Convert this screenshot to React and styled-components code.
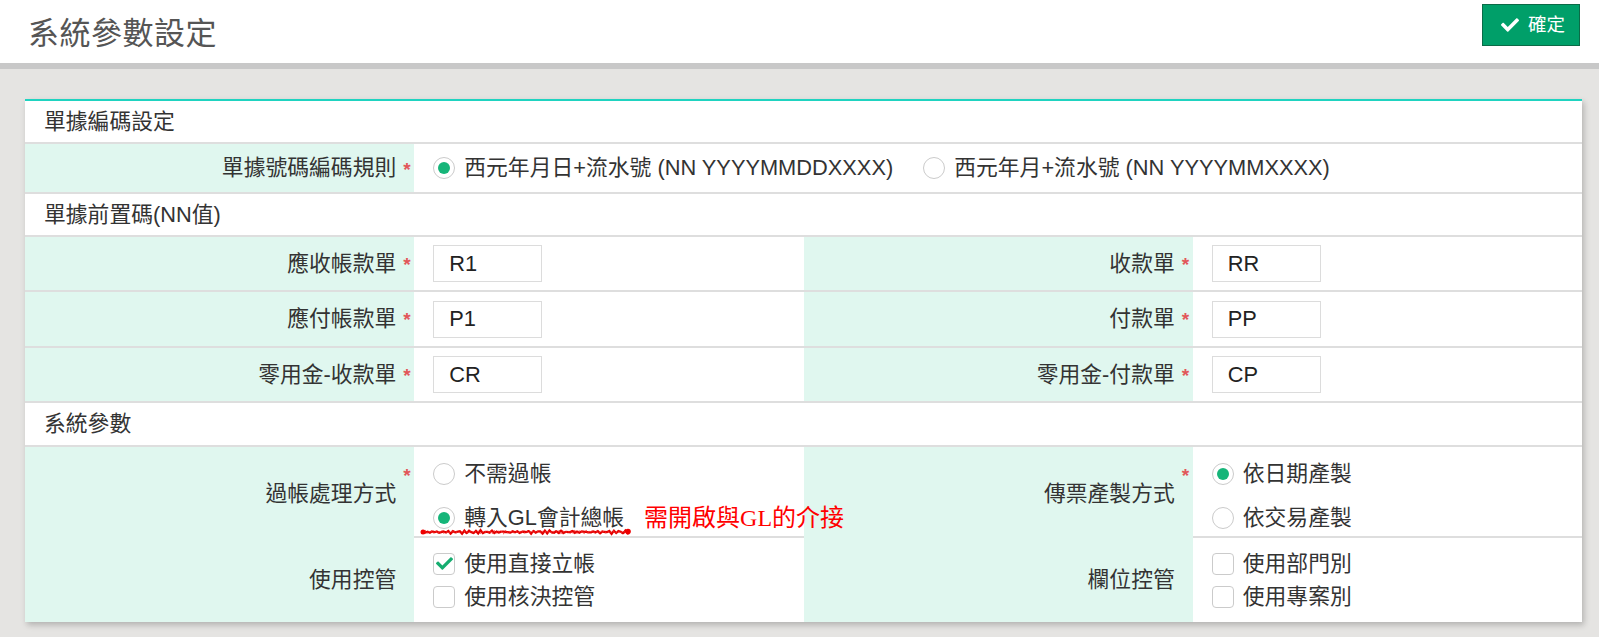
import React from "react";
import styled, { createGlobalStyle } from "styled-components";
import { FaCheck } from "react-icons/fa";

const GlobalStyle = createGlobalStyle`
  html, body {
    margin: 0;
    padding: 0;
    background: #e5e4e2;
    font-family: "Liberation Sans", "Noto Sans CJK TC", sans-serif;
    color: #333;
  }
  * { box-sizing: border-box; }
`;

const FONT = 21.8;

const Page = styled.div`
  min-height: 637px;
  background: #e5e4e2;
`;

const Header = styled.header`
  height: 69px;
  background: #fff;
  border-bottom: 6px solid #c8c8c8;
  display: flex;
  align-items: flex-start;
  justify-content: space-between;
  padding: 0 19px 0 28px;
`;

const Title = styled.h1`
  margin: 0;
  height: 63px;
  display: flex;
  align-items: center;
  padding-top: 3px;
  font-size: 31px;
  font-weight: normal;
  color: #555;
  line-height: 1;
  letter-spacing: 0.5px;
`;

const ConfirmButton = styled.button`
  margin-top: 4px;
  width: 98px;
  height: 42px;
  display: flex;
  align-items: center;
  gap: 9px;
  padding: 0 0 0 18px;
  background: #009f69;
  border: 1px solid #0b6b47;
  color: #fff;
  font-family: inherit;
  font-size: 18.5px;
  line-height: 1;
  cursor: pointer;
  svg { width: 18px; height: 18px; }
`;

const Content = styled.main`
  padding: 30px 17px 0 25px;
`;

const Panel = styled.section`
  background: #fff;
  border-top: 2px solid #1fd3c0;
  box-shadow: 2px 3px 6px rgba(0, 0, 0, 0.22);
`;

const SectionRow = styled.div`
  height: ${(p) => p.$h || 43}px;
  display: flex;
  align-items: center;
  padding-left: 19px;
  font-size: ${FONT}px;
  line-height: 1;
  border-bottom: 2px solid #dedede;
  color: #333;
`;

const FormRow = styled.div`
  display: grid;
  grid-template-columns: repeat(4, minmax(0, 1fr));
  height: ${(p) => p.$h}px;
  border-bottom: ${(p) => (p.$last ? "none" : "2px solid #dedede")};
`;

const LabelCell = styled.div`
  background: #e0f7ef;
  display: flex;
  justify-content: flex-end;
  align-items: center;
  padding-right: 2px;
  font-size: ${FONT}px;
  line-height: 1;
  color: #333;
`;

const Req = styled.span`
  align-self: flex-start;
  margin-top: ${(p) => p.$top || 17}px;
  margin-left: 7px;
  width: 9px;
  font-size: 19px;
  font-weight: bold;
  line-height: 1;
  color: #e2575a;
  visibility: ${(p) => (p.$show ? "visible" : "hidden")};
`;

const ValueCell = styled.div`
  grid-column: span ${(p) => p.$span || 1};
  display: flex;
  flex-direction: ${(p) => (p.$stack ? "column" : "row")};
  justify-content: ${(p) => (p.$stack ? "center" : "flex-start")};
  align-items: ${(p) => (p.$stack ? "flex-start" : "center")};
  gap: ${(p) => p.$gap || 0}px;
  padding-left: 19px;
  padding-top: ${(p) => p.$pt || 0}px;
  font-size: ${FONT}px;
  line-height: 1;
  color: #333;
`;

const Option = styled.label`
  position: relative;
  display: flex;
  align-items: center;
  gap: 9px;
  height: ${(p) => p.$h || 44}px;
  white-space: nowrap;
`;

const RadioCircle = styled.span`
  width: 22px;
  height: 22px;
  flex: none;
  border: 1px solid #cbcbcb;
  border-radius: 50%;
  background: #fff;
  display: flex;
  align-items: center;
  justify-content: center;
  &::after {
    content: "";
    width: 12px;
    height: 12px;
    border-radius: 50%;
    background: ${(p) => (p.$checked ? "#16b579" : "transparent")};
  }
`;

const CheckBox = styled.span`
  width: 22px;
  height: 22px;
  flex: none;
  border: 1px solid #cbcbcb;
  border-radius: 4px;
  background: #fff;
  display: flex;
  align-items: center;
  justify-content: center;
  color: #16ad70;
  svg { width: 17px; height: 17px; }
`;

const TextInput = styled.input`
  width: 109px;
  height: 37px;
  border: 1px solid #dcdcdc;
  padding: 0 15px;
  font-family: "Liberation Sans", "Noto Sans CJK TC", sans-serif;
  font-size: ${FONT}px;
  color: #222;
  background: #fff;
  outline: none;
`;

const Note = styled.span`
  margin-left: 11px;
  font-family: "Liberation Serif", "Noto Sans CJK TC", serif;
  font-size: 24px;
  color: #f00;
`;

const Scribble = styled.svg`
  position: absolute;
  left: -13px;
  top: 32px;
  width: 214px;
  height: 8px;
  overflow: visible;
  pointer-events: none;
`;

const makePoints = (seed, amp) =>
  Array.from({ length: 90 }, (_, i) => {
    const x = 3 + i * 2.3;
    const y =
      4 +
      Math.sin(i * 2.7 + seed) * amp +
      ((((i + seed) * 7) % 5) - 2) * 0.35;
    return `${x.toFixed(1)},${y.toFixed(1)}`;
  }).join(" ");

const scribbleA = makePoints(0, 1.1);
const scribbleB = makePoints(2, 0.9);

function RedScribble() {
  return (
    <Scribble viewBox="0 0 214 8">
      <polyline
        points={scribbleA}
        fill="none"
        stroke="#e10000"
        strokeWidth="2.3"
        strokeDasharray="3 1.2 1.5 1"
        strokeLinecap="round"
      />
      <polyline
        points={scribbleB}
        fill="none"
        stroke="#ff2b2b"
        strokeWidth="1.5"
        strokeDasharray="1.2 1.6"
        opacity="0.8"
      />
      <circle cx="3" cy="4" r="2.5" fill="#e00" />
      <circle cx="208" cy="3.6" r="2.8" fill="#e00" />
    </Scribble>
  );
}

function Label({ children, required, top }) {
  return (
    <LabelCell>
      {children}
      <Req $show={required} $top={top}>*</Req>
    </LabelCell>
  );
}

function Radio({ checked, children, h }) {
  return (
    <Option $h={h}>
      <RadioCircle $checked={checked} />
      {children}
    </Option>
  );
}

function Check({ checked, children, h }) {
  return (
    <Option $h={h}>
      <CheckBox>{checked && <FaCheck />}</CheckBox>
      {children}
    </Option>
  );
}

const prefixRows = [
  ["應收帳款單", "R1", "收款單", "RR"],
  ["應付帳款單", "P1", "付款單", "PP"],
  ["零用金-收款單", "CR", "零用金-付款單", "CP"],
];

export default function App() {
  return (
    <Page>
      <GlobalStyle />
      <Header>
        <Title>系統參數設定</Title>
        <ConfirmButton>
          <FaCheck />
          確定
        </ConfirmButton>
      </Header>
      <Content>
        <Panel>
          <SectionRow $h={43}>單據編碼設定</SectionRow>
          <FormRow $h={50}>
            <Label required top={16}>單據號碼編碼規則</Label>
            <ValueCell $span={3} $gap={30}>
              <Radio checked>西元年月日+流水號 (NN YYYYMMDDXXXX)</Radio>
              <Radio>西元年月+流水號 (NN YYYYMMXXXX)</Radio>
            </ValueCell>
          </FormRow>
          <SectionRow $h={43}>單據前置碼(NN值)</SectionRow>
          {prefixRows.map(([l1, v1, l2, v2], i) => (
            <FormRow key={l1} $h={i === 1 ? 56 : 55}>
              <Label required top={18}>{l1}</Label>
              <ValueCell>
                <TextInput defaultValue={v1} readOnly />
              </ValueCell>
              <Label required top={18}>{l2}</Label>
              <ValueCell>
                <TextInput defaultValue={v2} readOnly />
              </ValueCell>
            </FormRow>
          ))}
          <SectionRow $h={44}>系統參數</SectionRow>
          <FormRow $h={91}>
            <Label required top={19}>過帳處理方式</Label>
            <ValueCell $stack $pt={5}>
              <Radio>不需過帳</Radio>
              <Radio checked>
                轉入GL會計總帳
                <Note>需開啟與GL的介接</Note>
                <RedScribble />
              </Radio>
            </ValueCell>
            <Label required top={19}>傳票產製方式</Label>
            <ValueCell $stack $pt={5}>
              <Radio checked>依日期產製</Radio>
              <Radio>依交易產製</Radio>
            </ValueCell>
          </FormRow>
          <FormRow $h={84} $last>
            <Label>使用控管</Label>
            <ValueCell $stack>
              <Check checked h={33}>使用直接立帳</Check>
              <Check h={33}>使用核決控管</Check>
            </ValueCell>
            <Label>欄位控管</Label>
            <ValueCell $stack>
              <Check h={33}>使用部門別</Check>
              <Check h={33}>使用專案別</Check>
            </ValueCell>
          </FormRow>
        </Panel>
      </Content>
    </Page>
  );
}
